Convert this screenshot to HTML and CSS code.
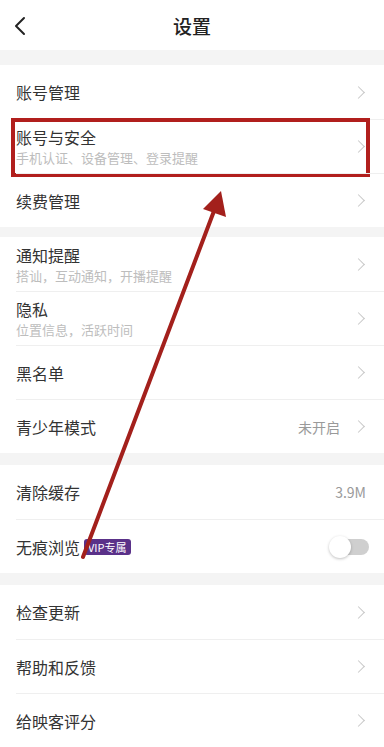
FILE: index.html
```html
<!DOCTYPE html>
<html lang="zh-CN">
<head>
    <meta charset="UTF-8">
    <meta name="viewport" content="width=device-width, initial-scale=1.0">
    <title>设置</title>
    <link rel="stylesheet" href="styles.css">
</head>
<body>
    <div class="page">
        <header class="nav">
            <svg class="back" width="14" height="20" viewBox="0 0 14 20">
                <path d="M11 2 L3 10 L11 18" fill="none" stroke="#222" stroke-width="2" stroke-linecap="round" stroke-linejoin="round"/>
            </svg>
            <h1>设置</h1>
        </header>

        <section class="group first">
            <div class="row">
                <span class="label">账号管理</span>
                <span class="chev"></span>
            </div>
            <div class="row highlight">
                <div class="text">
                    <span class="label">账号与安全</span>
                    <span class="sub">手机认证、设备管理、登录提醒</span>
                </div>
                <span class="chev"></span>
            </div>
            <div class="row">
                <span class="label">续费管理</span>
                <span class="chev"></span>
            </div>
        </section>

        <section class="group g2">
            <div class="row">
                <div class="text">
                    <span class="label">通知提醒</span>
                    <span class="sub">搭讪，互动通知，开播提醒</span>
                </div>
                <span class="chev"></span>
            </div>
            <div class="row">
                <div class="text">
                    <span class="label">隐私</span>
                    <span class="sub">位置信息，活跃时间</span>
                </div>
                <span class="chev"></span>
            </div>
            <div class="row">
                <span class="label">黑名单</span>
                <span class="chev"></span>
            </div>
            <div class="row">
                <span class="label">青少年模式</span>
                <span class="value">未开启</span>
                <span class="chev"></span>
            </div>
        </section>

        <section class="group g3">
            <div class="row">
                <span class="label">清除缓存</span>
                <span class="value end">3.9M</span>
            </div>
            <div class="row">
                <span class="label">无痕浏览</span>
                <span class="vip">VIP专属</span>
                <span class="toggle"><span class="knob"></span></span>
            </div>
        </section>

        <section class="group g4">
            <div class="row">
                <span class="label">检查更新</span>
                <span class="chev"></span>
            </div>
            <div class="row">
                <span class="label">帮助和反馈</span>
                <span class="chev"></span>
            </div>
            <div class="row">
                <span class="label">给映客评分</span>
                <span class="chev"></span>
            </div>
        </section>

        <!-- annotation arrow drawn over the list -->
        <svg class="arrow" width="384" height="747" viewBox="0 0 384 747">
            <line x1="83" y1="557" x2="214" y2="211" stroke="#a3201c" stroke-width="4" stroke-linecap="round"/>
            <polygon points="221,191 226,217 203,209" fill="#a3201c"/>
        </svg>
    </div>
</body>
</html>
```

FILE: styles.css
```css
body {
    margin: 0;
    background: #f4f4f4;
    font-family: "Noto Sans CJK SC", "Noto Sans", sans-serif;
    color: #333;
}
.page {
    position: relative;
    width: 384px;
    height: 747px;
    overflow: hidden;
    background: #f4f4f4;
}
.nav {
    height: 50px;
    background: #fff;
    display: flex;
    align-items: center;
    justify-content: center;
    position: relative;
}
.back {
    position: absolute;
    left: 13px;
    top: 16px;
}
.nav h1 {
    margin: 0;
    font-size: 19px;
    font-weight: 500;
    color: #222;
}
.group {
    background: #fff;
    margin-top: 11px;
}
.group.first {
    margin-top: 15px;
}
.group.g2 {
    margin-top: 10px;
}
.group.g3 {
    margin-top: 12px;
}
.group.g4 {
    margin-top: 12px;
}
.row {
    box-sizing: border-box;
    height: 54px;
    margin-left: 16px;
    padding-right: 18px;
    display: flex;
    align-items: center;
    border-top: 1px solid #efefef;
    position: relative;
}
.row:first-child {
    border-top: none;
}
.text {
    display: flex;
    flex-direction: column;
}
.label {
    font-size: 16px;
    line-height: 22px;
    color: #333;
}
.sub {
    font-size: 13px;
    line-height: 19px;
    color: #bdbdbd;
}
.text + .chev,
.label + .chev {
    margin-left: auto;
}
.chev {
    width: 8px;
    height: 8px;
    border-top: 1.5px solid #c8c8c8;
    border-right: 1.5px solid #c8c8c8;
    transform: rotate(45deg);
    margin-right: 3px;
}
.value {
    margin-left: auto;
    margin-right: 14px;
    font-size: 14px;
    color: #9a9a9a;
}
.value.end {
    margin-right: 0;
}
.highlight::after {
    content: "";
    position: absolute;
    left: -5px;
    right: 14px;
    top: -2px;
    bottom: -4px;
    border: 4px solid #b11f1d;
}
.vip {
    margin-left: 4px;
    background: #5a3189;
    color: #fff;
    font-size: 11px;
    line-height: 16px;
    padding: 0 4px;
    border-radius: 3px;
}
.toggle {
    margin-left: auto;
    margin-right: -3px;
    width: 36px;
    height: 16px;
    border-radius: 8px;
    background: #cfcfcf;
    position: relative;
}
.knob {
    position: absolute;
    left: -4px;
    top: -3px;
    width: 22px;
    height: 22px;
    border-radius: 50%;
    background: #fff;
    box-shadow: 0 1px 3px rgba(0,0,0,0.25);
}
.arrow {
    position: absolute;
    left: 0;
    top: 0;
    pointer-events: none;
}
```
